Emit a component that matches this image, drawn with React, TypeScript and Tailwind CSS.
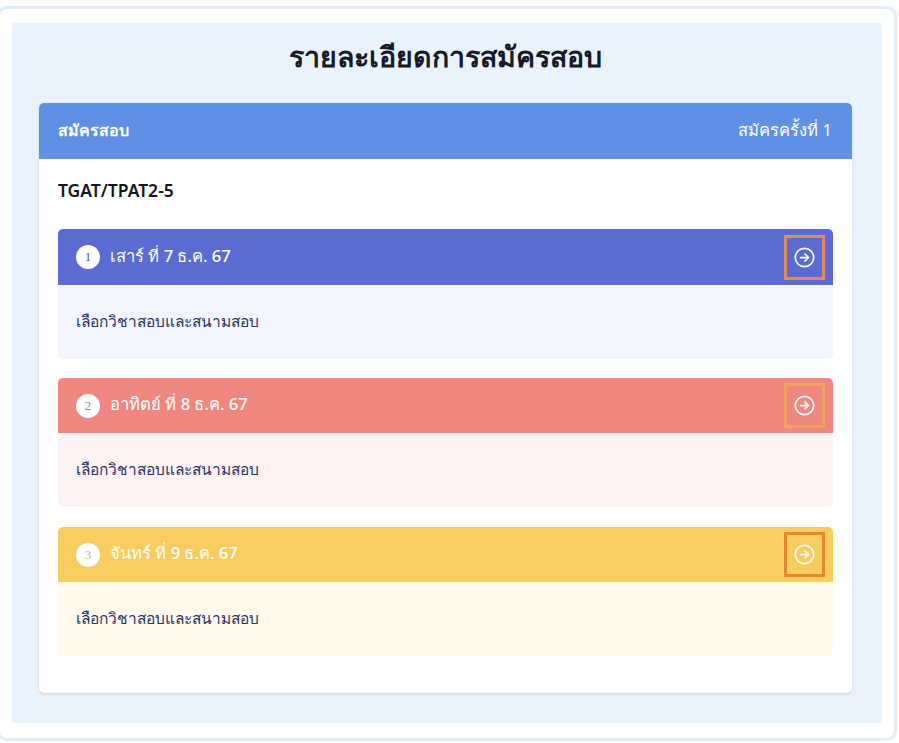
const F = "font-['Noto_Sans','Noto_Sans_CJK_SC',sans-serif]";
function Arrow({ c }: { c: string }) {
  return (
    <div className={`w-[41px] h-[45px] border-[3px] ${c} flex items-center justify-center`}>
      <svg width="21" height="21" viewBox="0 0 24 24" fill="none" stroke="white" strokeWidth="2" strokeLinecap="round" strokeLinejoin="round">
        <circle cx="12" cy="12" r="10.5" /><path d="M7.5 12h9" /><path d="m12.5 16 4-4-4-4" />
      </svg>
    </div>
  );
}
function Day({ n, label, head, body, border, num, mb, h }: { n: number; label: string; head: string; body: string; border: string; num: string; mb: string; h: string }) {
  return (
    <div className={`${mb} rounded-[5px] overflow-hidden ${body}`}>
      <div className={`${head} ${h} pl-[18px] pr-[8px] flex items-center justify-between`}>
        <div className="flex items-center gap-[10px]">
          <span className={`w-6 h-6 rounded-full bg-white flex items-center justify-center text-[13px] font-medium font-['Liberation_Serif',serif] ${num}`}>{n}</span>
          <span className="text-white text-[16.6px] font-medium -mt-0.5">{label}</span>
        </div>
        <Arrow c={border} />
      </div>
      <div className="h-[74px] pl-[18px] flex items-center text-[15.5px] text-[#2a3568]">เลือกวิชาสอบและสนามสอบ</div>
    </div>
  );
}
export default function App() {
  return (
    <div className={`${F} w-[899px] h-[743px] bg-white pt-[6px] overflow-hidden`}>
      <div className="-ml-[3px] w-[900px] h-[735px] border-[3px] border-[#e3edf7] rounded-[10px] bg-white pt-[14px] pl-[12px]">
        <div className="w-[870px] h-[700px] bg-[#e9f3fd] px-[27px]">
          <h1 className="text-[28.5px] leading-[66px] h-[80px] pr-1 font-semibold text-center text-[#151a28]">รายละเอียดการสมัครสอบ</h1>
          <div className="bg-white rounded-[5px] w-[813px] h-[590px] shadow-sm overflow-hidden">
            <div className="h-14 bg-[#5f90e4] pl-[19px] pr-[20px] flex items-center justify-between text-white">
              <span className="text-[16px] font-semibold -mt-0.5">สมัครสอบ</span>
              <span className="text-[16.5px] -mt-0.5">สมัครครั้งที่ 1</span>
            </div>
            <div className="px-[19px]">
              <div className="h-[70px] flex items-center pb-2 text-[17.5px] font-semibold text-[#14161f]">TGAT/TPAT2-5</div>
              <Day n={1} label="เสาร์ ที่ 7 ธ.ค. 67" h="h-14" head="bg-[#5b6bd2]" body="bg-[#f2f5fe]" border="border-[#dc8d5b]" num="text-[#4d5a8c]" mb="mb-[19px]" />
              <Day n={2} label="อาทิตย์ ที่ 8 ธ.ค. 67" h="h-[55px]" head="bg-[#f08781]" body="bg-[#fef2f2]" border="border-[#f0a263]" num="text-[#8a8a9a]" mb="mb-[20px]" />
              <Day n={3} label="จันทร์ ที่ 9 ธ.ค. 67" h="h-[55px]" head="bg-[#f7cd5f]" body="bg-[#fffaec]" border="border-[#e4872f]" num="text-[#d8b860]" mb="" />
            </div>
          </div>
        </div>
      </div>
    </div>
  );
}
